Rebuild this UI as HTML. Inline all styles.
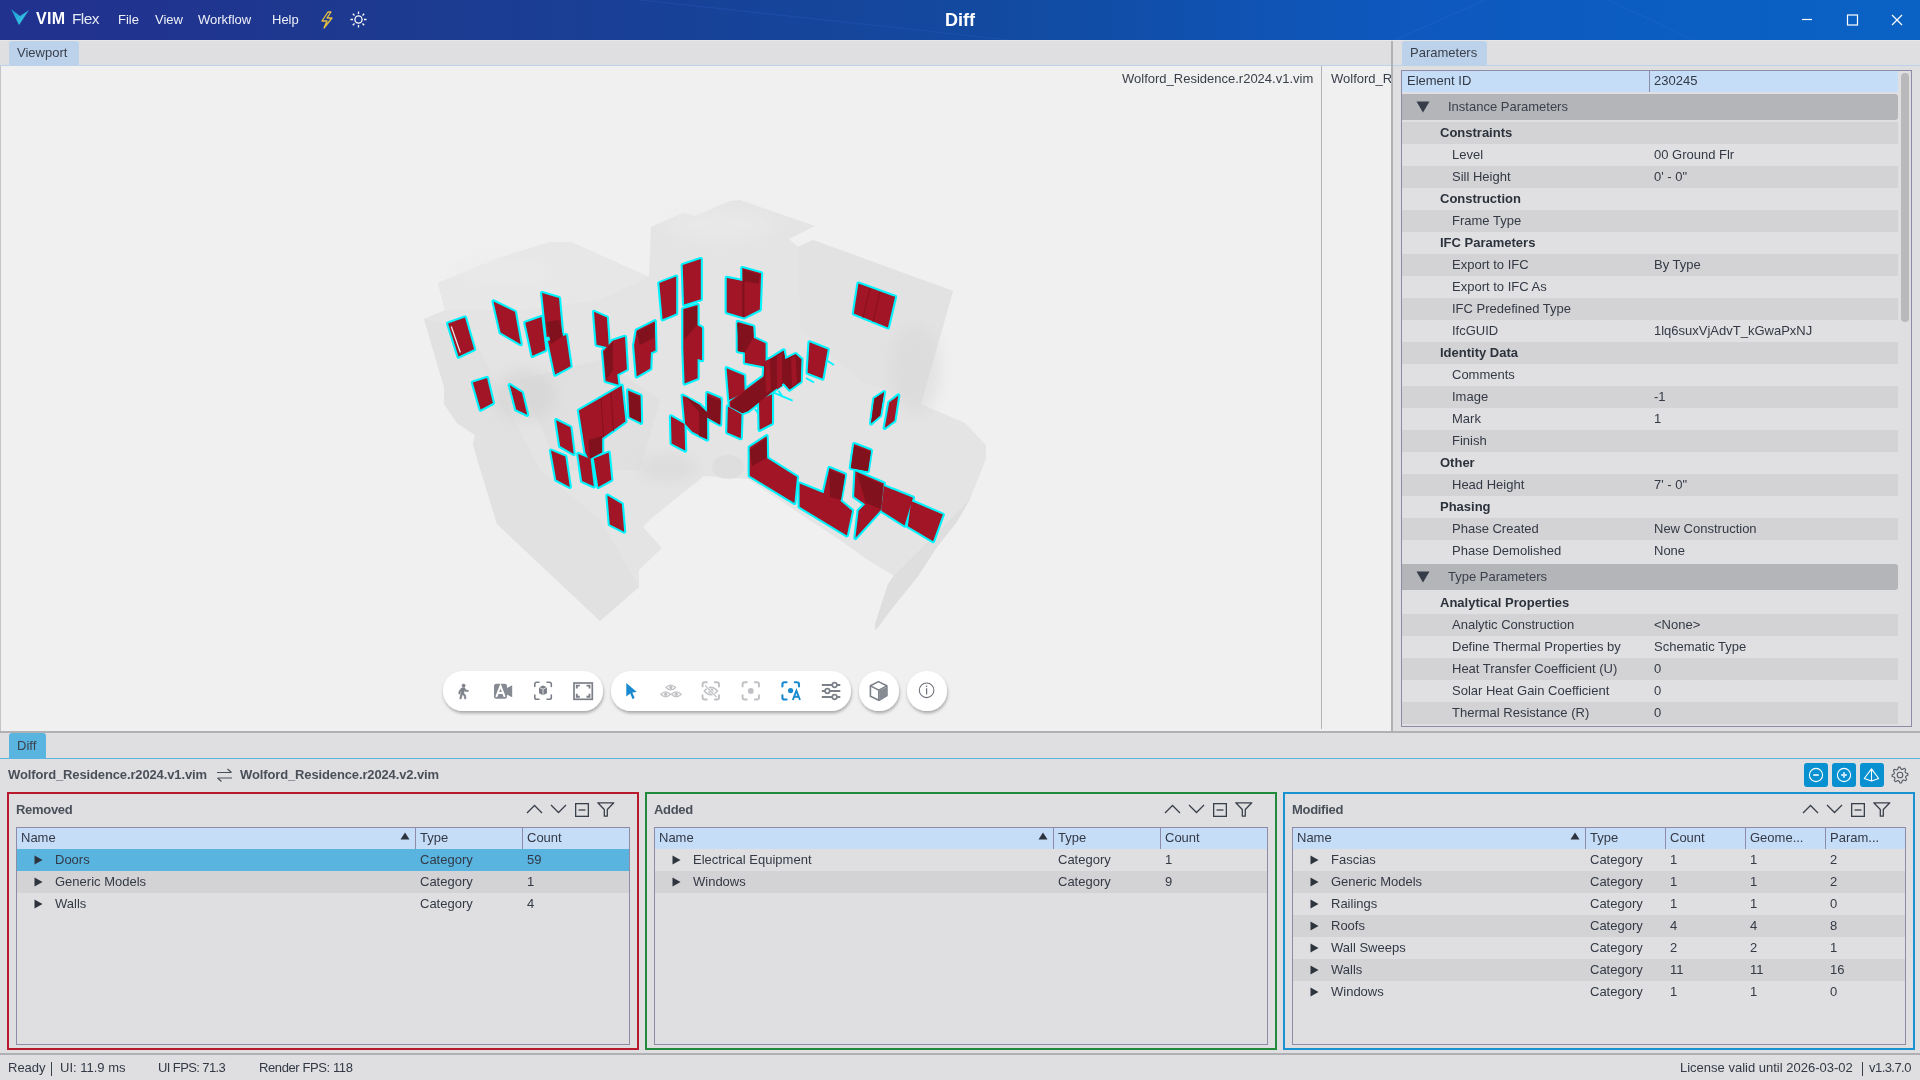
<!DOCTYPE html>
<html><head><meta charset="utf-8">
<style>
*{box-sizing:border-box;margin:0;padding:0}
html,body{width:1920px;height:1080px;overflow:hidden;background:#dfdfe1;font-family:"Liberation Sans",sans-serif;font-size:13px;color:#3b404a}
.a{position:absolute}
.t{position:absolute;white-space:pre;line-height:16px;will-change:transform}
#title{left:0;top:0;width:1920px;height:40px;background:linear-gradient(90deg,#21318e 0%,#21338f 5%,#1c3a90 21%,#124aa0 52%,#0e58be 73%,#0b5ec2 88.5%,#0a62c4 100%);overflow:hidden}
.menu{color:#eef0f8;top:12px}
.tabstrip{background:#dfdfe1}
.row{position:absolute;height:22px}
.dk{background:#d3d3d5}
.lt{background:#e0e0e2}
.pl{left:50px}
</style></head><body>
<!-- TITLE BAR -->
<div id="title" class="a">
  <svg class="a" style="left:0;top:0" width="1920" height="40">
    <path d="M640 0 L1010 40" stroke="#2a5cc0" stroke-width="1.2" opacity=".35" fill="none"/>
    <path d="M1395 40 L1485 0" stroke="#2a6ad0" stroke-width="1.2" opacity=".35" fill="none"/>
    <path d="M1608 0 L1694 40" stroke="#2a6ad0" stroke-width="1.2" opacity=".35" fill="none"/>
  </svg>
  <svg class="a" style="left:10px;top:9px" width="20" height="17" viewBox="0 0 20 17">
    <defs><linearGradient id="lg" x1="0" y1="0" x2="1" y2="1"><stop offset="0" stop-color="#1890d4"/><stop offset="1" stop-color="#40d8e6"/></linearGradient></defs>
    <path d="M1 0 L10 7 L19 1 L9 16 Z" fill="url(#lg)"/>
  </svg>
  <div class="t" style="left:35.5px;top:10.7px;color:#fff;font-weight:700;font-size:16px;letter-spacing:0.3px">VIM</div>
  <div class="t" style="left:72px;top:10.5px;color:#e4e8f4;font-size:15.5px;letter-spacing:-0.6px">Flex</div>
  <div class="t menu" style="left:118px">File</div>
  <div class="t menu" style="left:155px">View</div>
  <div class="t menu" style="left:198px">Workflow</div>
  <div class="t menu" style="left:272px">Help</div>
  <svg class="a" style="left:319px;top:11px" width="16" height="18" viewBox="0 0 16 18"><path d="M9 1 L3 10 H8 L5 17 L13 7 H8 L12 1 Z" fill="none" stroke="#e8c040" stroke-width="1.3" stroke-linejoin="round"/></svg>
  <svg class="a" style="left:350px;top:11px" width="17" height="17" viewBox="0 0 17 17"><g stroke="#fff" stroke-width="1.3" fill="none"><circle cx="8.5" cy="8.5" r="3.6"/><path d="M8.5 0.5V3M8.5 14V16.5M0.5 8.5H3M14 8.5H16.5M2.8 2.8L4.5 4.5M12.5 12.5L14.2 14.2M2.8 14.2L4.5 12.5M12.5 4.5L14.2 2.8"/></g></svg>
  <div class="t" style="left:945px;top:10px;color:#fff;font-weight:700;font-size:18px;line-height:20px">Diff</div>
  <svg class="a" style="left:1795px;top:10px" width="120" height="20">
    <g stroke="#fff" stroke-width="1.2" fill="none">
      <path d="M7 9.5H17"/>
      <rect x="52.5" y="5" width="10" height="10"/>
      <path d="M97 5L107 15M107 5L97 15"/>
    </g>
  </svg>
</div>
<div class="a" style="left:0;top:40px;width:1920px;height:1px;background:#e6e6e8"></div>

<!-- LEFT TAB STRIP -->
<div class="a tabstrip" style="left:0;top:41px;width:1391px;height:24px"></div>
<div class="a" style="left:9px;top:41px;width:70px;height:25px;background:#bcd2ea;border-radius:3px 3px 0 0"></div>
<div class="t" style="left:17px;top:45px;color:#3a404c">Viewport</div>
<div class="a" style="left:0;top:65px;width:1391px;height:1px;background:#bcd2ea"></div>

<!-- VIEWPORT -->
<div id="vp" class="a" style="left:0;top:66px;width:1391px;height:665px;background:#f0f0f0;overflow:hidden">
  <div class="a" style="left:0;top:0;width:1px;height:665px;background:#c4c4c8"></div>
  <div class="a" style="left:1321px;top:0;width:1px;height:663px;background:#b4b4b8"></div>
  <div class="t" style="left:1122px;top:5px;color:#3a404a">Wolford_Residence.r2024.v1.vim</div>
  <div class="t" style="left:1331px;top:5px;color:#3a404a">Wolford_Residence.r2024.v2.vim</div>
  <svg class="a" style="left:0;top:0" width="1391" height="665">
<polygon points="438.0,217.0 499.0,192.0 550.0,176.0 571.0,176.0 649.0,211.0 651.0,161.0 683.0,147.0 695.0,150.0 730.0,135.0 740.0,134.0 815.0,160.0 789.0,173.0 798.0,181.0 813.0,174.0 953.0,225.0 921.0,338.0 965.0,357.0 986.0,379.0 986.0,393.0 969.6,434.0 956.7,456.0 937.2,480.7 917.8,510.5 895.7,537.7 875.6,564.3 875.0,558.4 881.5,537.7 888.0,518.3 893.8,509.8 867.2,493.6 840.0,474.2 748.0,413.0 704.0,410.0 653.0,451.0 643.0,461.0 662.0,482.0 639.0,504.0 639.0,521.0 600.0,555.0 497.0,458.0 473.0,379.0 475.0,369.0 457.0,357.0 444.0,338.0 444.0,321.0 424.0,253.0 445.0,244.0" fill="#e4e4e4"/>
<polygon points="438.0,217.0 499.0,192.0 550.0,176.0 571.0,176.0 649.0,211.0 600.0,234.0 520.0,244.0 445.0,244.0" fill="#e7e7e7"/>
<polygon points="813.0,174.0 953.0,225.0 921.0,338.0 860.0,314.0 800.0,264.0 798.0,181.0" fill="#e2e2e2"/>
<polygon points="424.0,253.0 444.0,321.0 444.0,338.0 457.0,357.0 475.0,369.0 473.0,379.0 497.0,458.0 600.0,555.0 639.0,521.0 600.0,454.0 540.0,404.0 470.0,264.0" fill="#e1e1e1"/>
<polygon points="520.0,314.0 600.0,294.0 660.0,334.0 640.0,404.0 560.0,404.0" fill="#dedede" opacity=".8"/>
<polygon points="875.6,564.3 875.0,558.4 881.5,537.7 888.0,518.3 893.8,509.8 930.0,474.0 969.6,434.0 956.7,456.0 937.2,480.7 917.8,510.5 895.7,537.7" fill="#dedede"/>
<defs><filter id="bl" x="-50%" y="-50%" width="200%" height="200%"><feGaussianBlur stdDeviation="7"/></filter></defs>
<g filter="url(#bl)" opacity=".55"><ellipse cx="525" cy="329" rx="32" ry="26" fill="#d2d2d2"/><ellipse cx="668" cy="402" rx="30" ry="13" fill="#d6d6d6"/><ellipse cx="915" cy="304" rx="25" ry="45" fill="#d8d8d8"/></g>
<g filter="url(#bl)" opacity=".6"><ellipse cx="720" cy="159" rx="55" ry="16" fill="#ebebeb"/><ellipse cx="505" cy="206" rx="50" ry="14" fill="#ebebeb"/></g>
<ellipse cx="728" cy="401" rx="16" ry="12" fill="#dcdcdc" opacity=".8"/>
<g fill="#00f4ff" stroke="#00f4ff" stroke-width="4.2" stroke-linejoin="round">
<polygon points="448.1,257.4 465.0,251.6 474.1,283.3 458.5,290.5"/>
<polygon points="493.5,235.4 514.9,245.8 520.7,278.2 500.6,266.5"/>
<polygon points="525.3,256.8 541.5,250.9 545.4,284.0 532.4,289.8"/>
<polygon points="542.1,227.0 559.0,232.1 562.2,268.4 546.7,271.0"/>
<polygon points="548.0,274.9 566.1,269.1 570.6,300.2 555.1,308.6"/>
<polygon points="594.0,245.8 606.9,251.6 608.9,281.4 596.6,278.8"/>
<polygon points="603.0,285.1 612.7,274.7 625.0,270.8 626.9,303.2 617.2,308.4 618.5,318.8 605.6,314.9"/>
<polygon points="472.8,316.4 487.0,311.9 492.9,337.1 480.6,343.6"/>
<polygon points="509.7,319.0 522.0,326.8 527.2,348.8 516.2,343.6"/>
<polygon points="636.7,264.4 654.8,255.3 655.5,284.5 650.9,286.4 650.3,302.6 636.7,310.4 634.1,279.3"/>
<polygon points="659.3,217.1 676.2,210.6 676.2,247.5 662.6,253.3"/>
<polygon points="682.7,198.9 700.8,193.1 700.8,233.3 684.0,238.4"/>
<polygon points="683.3,243.0 697.6,239.1 697.6,259.2 702.1,261.8 702.1,294.2 697.6,292.9 697.6,312.3 684.6,317.5 683.3,282.5"/>
<polygon points="726.7,211.9 733.0,213.0 742.3,215.1 742.3,202.1 761.1,207.3 759.8,243.6 744.2,251.4 726.7,246.2"/>
<polygon points="737.8,255.9 753.3,260.5 754.0,272.1 765.6,277.3 765.6,300.7 744.9,296.8 744.9,286.4 737.8,285.1"/>
<polygon points="726.6,302.2 744.1,309.4 744.7,326.2 729.2,334.0"/>
<polygon points="729.6,335.5 744.4,324.4 763.7,310.3 764.4,295.5 771.9,291.8 783.7,284.4 785.2,293.3 795.6,288.1 801.5,293.3 800.7,315.5 789.6,323.6 783.7,317.0 771.9,325.9 748.1,345.1 742.2,347.3 729.6,340.7"/>
<polygon points="727.9,340.5 741.5,348.3 740.8,372.2 727.2,366.4"/>
<polygon points="759.0,334.0 772.0,328.2 772.0,357.3 759.6,363.8"/>
<polygon points="809.5,276.3 827.7,283.4 822.5,312.6 807.6,306.8"/>
<polygon points="871.1,357.3 874.3,332.7 884.0,326.2 880.2,349.5"/>
<polygon points="884.7,361.9 889.2,336.6 898.3,329.5 894.4,354.7"/>
<polygon points="858.4,217.6 895.1,230.8 887.9,261.4 853.8,247.6"/>
<polygon points="578.9,344.5 621.7,319.8 625.5,355.5 602.2,372.3 602.2,386.6 588.6,393.1 585.4,386.6"/>
<polygon points="628.1,324.4 640.5,329.6 641.1,356.8 629.4,350.9"/>
<polygon points="556.2,354.2 570.5,361.3 573.7,387.9 560.1,380.1"/>
<polygon points="551.0,384.6 565.3,390.5 569.8,420.9 556.2,413.8"/>
<polygon points="578.2,387.9 590.6,393.1 593.8,420.3 582.1,415.1"/>
<polygon points="593.8,392.4 608.7,386.6 611.3,413.8 598.3,420.9"/>
<polygon points="607.4,429.5 621.8,438.0 624.2,465.7 609.8,458.4"/>
<polygon points="670.9,350.3 684.5,358.1 685.2,384.6 671.6,377.5"/>
<polygon points="682.6,329.6 699.4,338.6 707.1,346.4 707.2,373.6 692.3,365.8 685.2,358.1"/>
<polygon points="707.2,327.0 720.8,332.8 720.2,358.7 707.2,351.6"/>
<polygon points="749.7,381.2 766.6,370.2 767.2,392.2 797.0,411.0 794.4,437.0 749.7,409.7"/>
<polygon points="799.6,417.5 823.6,427.2 829.4,402.0 845.0,408.4 840.5,435.0 852.1,444.7 846.9,469.4 799.6,440.8"/>
<polygon points="854.1,378.0 870.9,384.5 867.7,405.2 850.8,402.0"/>
<polygon points="855.4,405.2 883.9,417.5 881.3,443.4 855.4,472.0 858.6,444.7 865.1,438.2 854.1,430.5"/>
<polygon points="883.9,420.1 913.0,431.8 904.6,459.6 881.3,444.7"/>
<polygon points="911.1,435.0 942.8,448.6 933.1,475.2 907.9,460.3"/>
<path d="M827.7 295 L834 299 M806 312 L814 316.5 M771.9 325.9 L792.6 334.7 M778.5 324.4 L782.2 330.3 M755 343 L760 350" fill="none" stroke-width="1.8"/>
</g>
<g fill="#a21526">
<polygon points="448.1,257.4 465.0,251.6 474.1,283.3 458.5,290.5"/>
<polygon points="493.5,235.4 514.9,245.8 520.7,278.2 500.6,266.5"/>
<polygon points="525.3,256.8 541.5,250.9 545.4,284.0 532.4,289.8"/>
<polygon points="542.1,227.0 559.0,232.1 562.2,268.4 546.7,271.0"/>
<polygon points="548.0,274.9 566.1,269.1 570.6,300.2 555.1,308.6"/>
<polygon points="594.0,245.8 606.9,251.6 608.9,281.4 596.6,278.8"/>
<polygon points="603.0,285.1 612.7,274.7 625.0,270.8 626.9,303.2 617.2,308.4 618.5,318.8 605.6,314.9"/>
<polygon points="472.8,316.4 487.0,311.9 492.9,337.1 480.6,343.6"/>
<polygon points="509.7,319.0 522.0,326.8 527.2,348.8 516.2,343.6"/>
<polygon points="636.7,264.4 654.8,255.3 655.5,284.5 650.9,286.4 650.3,302.6 636.7,310.4 634.1,279.3"/>
<polygon points="659.3,217.1 676.2,210.6 676.2,247.5 662.6,253.3"/>
<polygon points="682.7,198.9 700.8,193.1 700.8,233.3 684.0,238.4"/>
<polygon points="683.3,243.0 697.6,239.1 697.6,259.2 702.1,261.8 702.1,294.2 697.6,292.9 697.6,312.3 684.6,317.5 683.3,282.5"/>
<polygon points="726.7,211.9 733.0,213.0 742.3,215.1 742.3,202.1 761.1,207.3 759.8,243.6 744.2,251.4 726.7,246.2"/>
<polygon points="737.8,255.9 753.3,260.5 754.0,272.1 765.6,277.3 765.6,300.7 744.9,296.8 744.9,286.4 737.8,285.1"/>
<polygon points="726.6,302.2 744.1,309.4 744.7,326.2 729.2,334.0"/>
<polygon points="729.6,335.5 744.4,324.4 763.7,310.3 764.4,295.5 771.9,291.8 783.7,284.4 785.2,293.3 795.6,288.1 801.5,293.3 800.7,315.5 789.6,323.6 783.7,317.0 771.9,325.9 748.1,345.1 742.2,347.3 729.6,340.7"/>
<polygon points="727.9,340.5 741.5,348.3 740.8,372.2 727.2,366.4"/>
<polygon points="759.0,334.0 772.0,328.2 772.0,357.3 759.6,363.8"/>
<polygon points="809.5,276.3 827.7,283.4 822.5,312.6 807.6,306.8"/>
<polygon points="871.1,357.3 874.3,332.7 884.0,326.2 880.2,349.5"/>
<polygon points="884.7,361.9 889.2,336.6 898.3,329.5 894.4,354.7"/>
<polygon points="858.4,217.6 895.1,230.8 887.9,261.4 853.8,247.6"/>
<polygon points="578.9,344.5 621.7,319.8 625.5,355.5 602.2,372.3 602.2,386.6 588.6,393.1 585.4,386.6"/>
<polygon points="628.1,324.4 640.5,329.6 641.1,356.8 629.4,350.9"/>
<polygon points="556.2,354.2 570.5,361.3 573.7,387.9 560.1,380.1"/>
<polygon points="551.0,384.6 565.3,390.5 569.8,420.9 556.2,413.8"/>
<polygon points="578.2,387.9 590.6,393.1 593.8,420.3 582.1,415.1"/>
<polygon points="593.8,392.4 608.7,386.6 611.3,413.8 598.3,420.9"/>
<polygon points="607.4,429.5 621.8,438.0 624.2,465.7 609.8,458.4"/>
<polygon points="670.9,350.3 684.5,358.1 685.2,384.6 671.6,377.5"/>
<polygon points="682.6,329.6 699.4,338.6 707.1,346.4 707.2,373.6 692.3,365.8 685.2,358.1"/>
<polygon points="707.2,327.0 720.8,332.8 720.2,358.7 707.2,351.6"/>
<polygon points="749.7,381.2 766.6,370.2 767.2,392.2 797.0,411.0 794.4,437.0 749.7,409.7"/>
<polygon points="799.6,417.5 823.6,427.2 829.4,402.0 845.0,408.4 840.5,435.0 852.1,444.7 846.9,469.4 799.6,440.8"/>
<polygon points="854.1,378.0 870.9,384.5 867.7,405.2 850.8,402.0"/>
<polygon points="855.4,405.2 883.9,417.5 881.3,443.4 855.4,472.0 858.6,444.7 865.1,438.2 854.1,430.5"/>
<polygon points="883.9,420.1 913.0,431.8 904.6,459.6 881.3,444.7"/>
<polygon points="911.1,435.0 942.8,448.6 933.1,475.2 907.9,460.3"/>
</g>
<g fill="#80111d">
<polygon points="546.0,256.0 559.0,254.0 563.0,270.0 551.0,278.0"/>
<polygon points="743.0,203.4 759.8,208.5 758.8,217.7 743.0,215.1"/>
<polygon points="742.3,215.1 744.5,215.0 744.5,251.0 742.3,251.0"/>
<polygon points="737.8,257.0 753.0,261.0 753.0,272.0 744.9,286.4 737.8,285.0"/>
<polygon points="764.4,296.0 771.9,292.5 783.7,285.0 785.2,293.3 795.6,288.6 800.7,294.0 800.7,315.5 789.6,323.6 783.7,317.0 771.9,325.9 748.1,345.1 742.2,347.3 731.0,340.5 731.0,336.5 744.4,325.5 763.7,311.3"/>
<polygon points="588.6,374.0 602.0,370.0 602.0,386.0 590.0,393.0"/>
<polygon points="749.7,384.0 766.6,372.0 766.6,392.0 752.0,400.0"/>
<polygon points="829.4,404.0 845.0,410.0 841.0,434.0 830.0,431.0"/>
<polygon points="854.1,380.0 870.9,386.0 868.0,405.0 851.0,402.0"/>
<polygon points="857.0,407.0 883.0,419.0 881.0,443.0 866.0,437.0"/>
<polygon points="685.0,330.0 699.0,339.0 707.0,346.0 707.0,373.0 699.0,370.0 699.0,346.0"/>
<polygon points="629.0,326.0 640.0,331.0 641.0,356.0 630.0,351.0"/>
<polygon points="604.0,286.0 612.7,276.0 613.0,304.0 606.0,314.0"/>
<polygon points="684.0,244.0 697.0,240.0 697.0,259.0 684.0,274.0"/>
<polygon points="737.0,257.0 753.0,261.0 752.0,271.0 738.0,270.0"/>
<polygon points="871.1,357.3 874.3,332.7 884.0,326.2 880.2,349.5"/>
<polygon points="636.7,266.0 654.8,257.0 654.0,272.0 640.0,279.0"/>
<polygon points="707.2,330.0 720.8,335.0 720.2,358.7 707.2,351.6"/>
</g>
<g fill="#a01525"><polygon points="765.0,296.0 770.0,293.5 771.0,324.0 766.0,327.5"/><polygon points="777.0,290.0 782.0,287.5 782.0,320.0 777.0,323.5"/><polygon points="791.0,292.0 795.5,289.5 797.0,317.0 792.0,320.5"/></g>
<path d="M451.3 260.5 L460.3 286.5" stroke="#e6e6e6" stroke-width="1.3"/>
<path d="M870 222 L863 252 M880 226 L873 256 M601 333 L603.5 371 M611 327 L613.5 365" stroke="#7e0f1a" stroke-width="1" opacity=".8"/>
</svg>
  <svg class="a" style="left:0;top:0" width="1391" height="665">
<defs><filter id="sh" x="-20%" y="-40%" width="140%" height="190%"><feDropShadow dx="0.6" dy="2.2" stdDeviation="1.5" flood-color="#000" flood-opacity="0.3"/></filter></defs>
<g transform="translate(0,-66)">
<g fill="#fff" filter="url(#sh)">
<rect x="443" y="671" width="160" height="40" rx="20"/>
<rect x="611" y="671" width="240" height="40" rx="20"/>
<circle cx="879" cy="691" r="20"/>
<circle cx="927" cy="691" r="20"/>
</g>
<!-- walker -->
<g fill="#7c8088" stroke="#7c8088" stroke-width="0.6" stroke-linejoin="round">
<circle cx="463.6" cy="685.6" r="1.6"/>
<path d="M461.5 688 L464.5 687.6 L466 690.2 L468.3 690.3 L468.3 691.4 L465.4 691.4 L464.5 690 L463.7 693.2 L465.6 695.3 L466 698.8 L464.6 698.8 L464.2 696 L462.4 694.3 L461.2 698.8 L459.7 698.8 L461.5 691 L460.2 692 L460 694 L458.8 694 L459 691.2 Z"/>
</g>
<!-- camera A -->
<rect x="494" y="683.8" width="13" height="15" rx="2.2" fill="#868a92"/>
<path d="M506 688.5 L512.2 685.3 V697.3 L506 694 Z" fill="#868a92"/>
<path d="M496.3 696.8 L500.5 686 L504.7 696.8 M497.9 693 H503.1" fill="none" stroke="#fff" stroke-width="2"/>
<!-- bracket cube -->
<g fill="none" stroke="#7c8088" stroke-width="1.6" stroke-linecap="round">
<path d="M534.8 686.5 V684 Q534.8 682.3 536.5 682.3 H539"/>
<path d="M547 682.3 H549.5 Q551.3 682.3 551.3 684 V686.5"/>
<path d="M534.8 695 V697.5 Q534.8 699.3 536.5 699.3 H539"/>
<path d="M547 699.3 H549.5 Q551.3 699.3 551.3 697.5 V695"/>
</g>
<path d="M539 687.3 L543 685.5 L547 687.3 V693.3 L543 695.3 L539 693.3 Z" fill="#7c8088"/>
<path d="M539 687.3 L543 689.2 L547 687.3 M543 689.2 V695.3" fill="none" stroke="#fff" stroke-width="0.7"/>
<!-- fullscreen -->
<rect x="574" y="683" width="18.3" height="16.3" fill="none" stroke="#7c8088" stroke-width="1.7"/>
<g fill="none" stroke="#7c8088" stroke-width="1.9">
<path d="M576.8 688.5 V685.6 H579.8 M586.5 685.6 H589.5 V688.5 M576.8 693.8 V696.7 H579.8 M586.5 696.7 H589.5 V693.8"/>
</g>
<!-- cursor -->
<path d="M626.3 683 L636.8 692 L632.3 692.4 L634.6 697.8 L632.6 699.3 L630.2 693.6 L626.3 696.6 Z" fill="#1a8ad0"/>
<!-- three eyes -->
<g fill="none" stroke="#c0c1c5" stroke-width="1.25">
<path d="M666 687.5 Q670.8 682.6 675.6 687.5 Q670.8 692.4 666 687.5 Z"/>
<path d="M660.9 694.3 Q665.7 689.4 670.5 694.3 Q665.7 699.2 660.9 694.3 Z"/>
<path d="M671.5 694.3 Q676.3 689.4 681.1 694.3 Q676.3 699.2 671.5 694.3 Z"/>
</g>
<g fill="#c0c1c5"><circle cx="670.8" cy="687.5" r="1.7"/><circle cx="665.7" cy="694.3" r="1.7"/><circle cx="676.3" cy="694.3" r="1.7"/></g>
<!-- eye crossed brackets -->
<g fill="none" stroke="#c0c1c5" stroke-width="1.9" stroke-linecap="round">
<path d="M702.6 686.5 V684.4 Q702.6 682.3 704.7 682.3 H706.8 M714.8 682.3 H716.9 Q719 682.3 719 684.4 V686.5 M702.6 695.3 V697.4 Q702.6 699.5 704.7 699.5 H706.8 M714.8 699.5 H716.9 Q719 699.5 719 697.4 V695.3"/>
</g>
<path d="M704.2 691 Q710.9 683.5 717.6 691 Q710.9 698.5 704.2 691 Z" fill="none" stroke="#c0c1c5" stroke-width="1.3"/>
<circle cx="710.9" cy="691" r="2.6" fill="#c0c1c5"/>
<path d="M705 685.3 L716.5 697" stroke="#ffffff" stroke-width="2.4"/>
<path d="M705 685.3 L716.5 697" stroke="#c0c1c5" stroke-width="1.2"/>
<!-- brackets dot -->
<g fill="none" stroke="#c0c1c5" stroke-width="1.9" stroke-linecap="round">
<path d="M742.6 686.5 V684.4 Q742.6 682.3 744.7 682.3 H746.8 M754.8 682.3 H756.9 Q759 682.3 759 684.4 V686.5 M742.6 695.3 V697.4 Q742.6 699.5 744.7 699.5 H746.8 M754.8 699.5 H756.9 Q759 699.5 759 697.4 V695.3"/>
</g>
<circle cx="750.8" cy="690.9" r="2.9" fill="#c0c1c5"/>
<!-- brackets dot A blue -->
<g fill="none" stroke="#1a8ad0" stroke-width="2.1" stroke-linecap="round">
<path d="M782.4 686.5 V684.4 Q782.4 682.3 784.5 682.3 H786.6 M794.8 682.3 H796.9 Q799 682.3 799 684.4 V686.5 M782.4 695.3 V697.4 Q782.4 699.5 784.5 699.5 H786.6"/>
</g>
<circle cx="790.6" cy="690.6" r="2.6" fill="#1a8ad0"/>
<path d="M792.8 700 L796.4 690.6 L800 700 M793.9 696.8 H798.9" fill="none" stroke="#1a8ad0" stroke-width="1.9"/>
<!-- sliders -->
<g stroke="#7c8088" stroke-width="2.1" fill="none">
<path d="M821.8 685 H840.3 M821.8 691 H840.3 M821.8 697 H840.3"/>
</g>
<g fill="#fff" stroke="#7c8088" stroke-width="1.7">
<circle cx="834.6" cy="685" r="2.3"/><circle cx="827.4" cy="691" r="2.3"/><circle cx="834.6" cy="697" r="2.3"/>
</g>
<!-- cube -->
<path d="M870.4 685.8 L878.4 681.6 L886.8 685.8 L886.8 695.5 L878.8 700.3 L870.4 696.2 Z" fill="none" stroke="#7c8088" stroke-width="1.6" stroke-linejoin="round"/>
<path d="M870.4 685.8 L878.8 690.2 L886.8 685.8 M878.8 690.2 V700.3" fill="none" stroke="#7c8088" stroke-width="1.5"/>
<path d="M879.2 690.6 L887.4 686.8 V696 L879.2 701 Z" fill="#868a92"/>
<!-- info -->
<circle cx="926.6" cy="690.3" r="7.3" fill="none" stroke="#6c7078" stroke-width="1.1"/>
<path d="M926.6 688.3 V694.5" stroke="#6c7078" stroke-width="1.2"/>
<circle cx="926.6" cy="686.3" r="0.8" fill="#6c7078"/>
</g>
</svg>

</div>

<!-- SPLITTERS -->
<div class="a" style="left:1391px;top:41px;width:2px;height:692px;background:#b0b1b5"></div>
<div class="a" style="left:0;top:731px;width:1920px;height:2px;background:#b0b1b5"></div>

<!-- RIGHT PANEL -->
<div class="a tabstrip" style="left:1393px;top:41px;width:527px;height:24px"></div>
<div class="a" style="left:1402px;top:41px;width:85px;height:25px;background:#bcd2ea;border-radius:3px 3px 0 0"></div>
<div class="t" style="left:1410px;top:45px;color:#3a404c">Parameters</div>
<div class="a" style="left:1393px;top:65px;width:527px;height:1px;background:#bcd2ea"></div>
<div id="params" class="a" style="left:1401px;top:70px;width:511px;height:657px;border:1px solid #8e8ba6;overflow:hidden"><div class="a" style="left:0;top:0;width:496px;height:21px;background:#c6ddf7"></div>
<div class="a" style="left:247px;top:0;width:1px;height:21px;background:#8e8ba6"></div>
<div class="t" style="left:5px;top:-1px;line-height:21px;color:#333945">Element ID</div>
<div class="t" style="left:252px;top:-1px;line-height:21px;color:#333945">230245</div>
<div class="a" style="left:0;top:23px;width:496px;height:26px;background:#b4b5b8;border-radius:0 3px 3px 0"></div>
<svg class="a" style="left:14px;top:30px" width="14" height="12"><path d="M0.5 0.5H13.5L7 11.5Z" fill="#363c48"/></svg>
<div class="t" style="left:46px;top:23px;line-height:26px;color:#3a404c">Instance Parameters</div>
<div class="a" style="left:0;top:51px;width:496px;height:22px;background:#d3d3d5"></div>
<div class="t" style="left:38px;top:51px;line-height:22px;font-weight:700;color:#2c323c">Constraints</div>
<div class="a" style="left:0;top:73px;width:496px;height:22px;background:#e0e0e2"></div>
<div class="t" style="left:50px;top:73px;line-height:22px;color:#333945">Level</div>
<div class="t" style="left:252px;top:73px;line-height:22px;color:#333945">00 Ground Flr</div>
<div class="a" style="left:0;top:95px;width:496px;height:22px;background:#d3d3d5"></div>
<div class="t" style="left:50px;top:95px;line-height:22px;color:#333945">Sill Height</div>
<div class="t" style="left:252px;top:95px;line-height:22px;color:#333945">0' - 0"</div>
<div class="a" style="left:0;top:117px;width:496px;height:22px;background:#e0e0e2"></div>
<div class="t" style="left:38px;top:117px;line-height:22px;font-weight:700;color:#2c323c">Construction</div>
<div class="a" style="left:0;top:139px;width:496px;height:22px;background:#d3d3d5"></div>
<div class="t" style="left:50px;top:139px;line-height:22px;color:#333945">Frame Type</div>
<div class="a" style="left:0;top:161px;width:496px;height:22px;background:#e0e0e2"></div>
<div class="t" style="left:38px;top:161px;line-height:22px;font-weight:700;color:#2c323c">IFC Parameters</div>
<div class="a" style="left:0;top:183px;width:496px;height:22px;background:#d3d3d5"></div>
<div class="t" style="left:50px;top:183px;line-height:22px;color:#333945">Export to IFC</div>
<div class="t" style="left:252px;top:183px;line-height:22px;color:#333945">By Type</div>
<div class="a" style="left:0;top:205px;width:496px;height:22px;background:#e0e0e2"></div>
<div class="t" style="left:50px;top:205px;line-height:22px;color:#333945">Export to IFC As</div>
<div class="a" style="left:0;top:227px;width:496px;height:22px;background:#d3d3d5"></div>
<div class="t" style="left:50px;top:227px;line-height:22px;color:#333945">IFC Predefined Type</div>
<div class="a" style="left:0;top:249px;width:496px;height:22px;background:#e0e0e2"></div>
<div class="t" style="left:50px;top:249px;line-height:22px;color:#333945">IfcGUID</div>
<div class="t" style="left:252px;top:249px;line-height:22px;color:#333945">1lq6suxVjAdvT_kGwaPxNJ</div>
<div class="a" style="left:0;top:271px;width:496px;height:22px;background:#d3d3d5"></div>
<div class="t" style="left:38px;top:271px;line-height:22px;font-weight:700;color:#2c323c">Identity Data</div>
<div class="a" style="left:0;top:293px;width:496px;height:22px;background:#e0e0e2"></div>
<div class="t" style="left:50px;top:293px;line-height:22px;color:#333945">Comments</div>
<div class="a" style="left:0;top:315px;width:496px;height:22px;background:#d3d3d5"></div>
<div class="t" style="left:50px;top:315px;line-height:22px;color:#333945">Image</div>
<div class="t" style="left:252px;top:315px;line-height:22px;color:#333945">-1</div>
<div class="a" style="left:0;top:337px;width:496px;height:22px;background:#e0e0e2"></div>
<div class="t" style="left:50px;top:337px;line-height:22px;color:#333945">Mark</div>
<div class="t" style="left:252px;top:337px;line-height:22px;color:#333945">1</div>
<div class="a" style="left:0;top:359px;width:496px;height:22px;background:#d3d3d5"></div>
<div class="t" style="left:50px;top:359px;line-height:22px;color:#333945">Finish</div>
<div class="a" style="left:0;top:381px;width:496px;height:22px;background:#e0e0e2"></div>
<div class="t" style="left:38px;top:381px;line-height:22px;font-weight:700;color:#2c323c">Other</div>
<div class="a" style="left:0;top:403px;width:496px;height:22px;background:#d3d3d5"></div>
<div class="t" style="left:50px;top:403px;line-height:22px;color:#333945">Head Height</div>
<div class="t" style="left:252px;top:403px;line-height:22px;color:#333945">7' - 0"</div>
<div class="a" style="left:0;top:425px;width:496px;height:22px;background:#e0e0e2"></div>
<div class="t" style="left:38px;top:425px;line-height:22px;font-weight:700;color:#2c323c">Phasing</div>
<div class="a" style="left:0;top:447px;width:496px;height:22px;background:#d3d3d5"></div>
<div class="t" style="left:50px;top:447px;line-height:22px;color:#333945">Phase Created</div>
<div class="t" style="left:252px;top:447px;line-height:22px;color:#333945">New Construction</div>
<div class="a" style="left:0;top:469px;width:496px;height:22px;background:#e0e0e2"></div>
<div class="t" style="left:50px;top:469px;line-height:22px;color:#333945">Phase Demolished</div>
<div class="t" style="left:252px;top:469px;line-height:22px;color:#333945">None</div>
<div class="a" style="left:0;top:493px;width:496px;height:26px;background:#b4b5b8;border-radius:0 3px 3px 0"></div>
<svg class="a" style="left:14px;top:500px" width="14" height="12"><path d="M0.5 0.5H13.5L7 11.5Z" fill="#363c48"/></svg>
<div class="t" style="left:46px;top:493px;line-height:26px;color:#3a404c">Type Parameters</div>
<div class="a" style="left:0;top:521px;width:496px;height:22px;background:#e0e0e2"></div>
<div class="t" style="left:38px;top:521px;line-height:22px;font-weight:700;color:#2c323c">Analytical Properties</div>
<div class="a" style="left:0;top:543px;width:496px;height:22px;background:#d3d3d5"></div>
<div class="t" style="left:50px;top:543px;line-height:22px;color:#333945">Analytic Construction</div>
<div class="t" style="left:252px;top:543px;line-height:22px;color:#333945">&lt;None&gt;</div>
<div class="a" style="left:0;top:565px;width:496px;height:22px;background:#e0e0e2"></div>
<div class="t" style="left:50px;top:565px;line-height:22px;color:#333945">Define Thermal Properties by</div>
<div class="t" style="left:252px;top:565px;line-height:22px;color:#333945">Schematic Type</div>
<div class="a" style="left:0;top:587px;width:496px;height:22px;background:#d3d3d5"></div>
<div class="t" style="left:50px;top:587px;line-height:22px;color:#333945">Heat Transfer Coefficient (U)</div>
<div class="t" style="left:252px;top:587px;line-height:22px;color:#333945">0</div>
<div class="a" style="left:0;top:609px;width:496px;height:22px;background:#e0e0e2"></div>
<div class="t" style="left:50px;top:609px;line-height:22px;color:#333945">Solar Heat Gain Coefficient</div>
<div class="t" style="left:252px;top:609px;line-height:22px;color:#333945">0</div>
<div class="a" style="left:0;top:631px;width:496px;height:22px;background:#d3d3d5"></div>
<div class="t" style="left:50px;top:631px;line-height:22px;color:#333945">Thermal Resistance (R)</div>
<div class="t" style="left:252px;top:631px;line-height:22px;color:#333945">0</div>
<div class="a" style="left:499px;top:2px;width:8px;height:249px;background:#b9b9bb;border-radius:4px"></div></div>

<!-- DIFF PANEL -->
<div class="a tabstrip" style="left:0;top:733px;width:1920px;height:25px"></div>
<div class="a" style="left:9px;top:733px;width:37px;height:26px;background:#5ab4e0;border-radius:3px 3px 0 0"></div>
<div class="t" style="left:17px;top:738px;color:#3a404c">Diff</div>
<div class="a" style="left:0;top:758px;width:1920px;height:1px;background:#5ab4e0"></div>
<div class="t" style="left:8px;top:767px;font-weight:700;color:#4a505a;letter-spacing:-0.13px">Wolford_Residence.r2024.v1.vim</div>
<svg class="a" style="left:216px;top:768px" width="17" height="14"><g fill="none" stroke="#4a505a" stroke-width="1.2"><path d="M1 4.5H15.5M11.5 1L15.5 4.5"/><path d="M16 10H1.5M5.5 13.5L1.5 10"/></g></svg>
<div class="t" style="left:240px;top:767px;font-weight:700;color:#4a505a;letter-spacing:-0.13px">Wolford_Residence.r2024.v2.vim</div>
<div class="a" style="left:1804px;top:763px;width:24px;height:24px;background:#0890d0;border-radius:3px"></div>
<div class="a" style="left:1832px;top:763px;width:24px;height:24px;background:#0890d0;border-radius:3px"></div>
<div class="a" style="left:1860px;top:763px;width:24px;height:24px;background:#0890d0;border-radius:3px"></div>
<svg class="a" style="left:1804px;top:763px" width="80" height="24"><g fill="none" stroke="#fff" stroke-width="1.1"><circle cx="12" cy="12" r="6.6"/><circle cx="40" cy="12" r="6.6"/><path d="M67.5 5.8V18M67.5 5.8L60.3 15.5L67.5 18L74.7 15.5Z" stroke-linejoin="round"/></g><path d="M9.2 12H14.8M37.2 12H42.8M40 9.2V14.8" stroke="#c8e8f8" stroke-width="1.9"/></svg>
<svg class="a" style="left:0;top:0;pointer-events:none" width="1920" height="1080"><polygon points="1907.85,773.44 1908.00,775.00 1905.88,776.17 1905.54,777.30 1906.65,779.44 1905.66,780.66 1903.33,779.99 1902.30,780.54 1901.56,782.85 1900.00,783.00 1898.83,780.88 1897.70,780.54 1895.56,781.65 1894.34,780.66 1895.01,778.33 1894.46,777.30 1892.15,776.56 1892.00,775.00 1894.12,773.83 1894.46,772.70 1893.35,770.56 1894.34,769.34 1896.67,770.01 1897.70,769.46 1898.44,767.15 1900.00,767.00 1901.17,769.12 1902.30,769.46 1904.44,768.35 1905.66,769.34 1904.99,771.67 1905.54,772.70" fill="none" stroke="#555a64" stroke-width="1.1" stroke-linejoin="round"/><circle cx="1900" cy="775" r="2.8" fill="none" stroke="#555a64" stroke-width="1.1"/></svg>
<div class="a" style="left:7px;top:792px;width:632px;height:258px;border:2px solid #b8192c"></div>
<div class="t" style="left:16px;top:801.5px;font-weight:700;color:#4a505a;letter-spacing:-0.3px">Removed</div>
<svg class="a" style="left:526px;top:804px" width="17" height="10"><path d="M1 9L8.5 1.5L16 9" fill="none" stroke="#3a404a" stroke-width="1.3"/></svg>
<svg class="a" style="left:550px;top:804px" width="17" height="10"><path d="M1 1L8.5 8.5L16 1" fill="none" stroke="#3a404a" stroke-width="1.3"/></svg>
<svg class="a" style="left:575px;top:803px" width="14" height="14"><rect x="0.65" y="0.65" width="12.7" height="12.7" fill="none" stroke="#3a404a" stroke-width="1.3"/><path d="M3.5 7H10.5" stroke="#3a404a" stroke-width="1.3"/></svg>
<svg class="a" style="left:597px;top:802px" width="18" height="15"><path d="M0.8 0.8H16.8L10.3 7.5V14.2H7.3V7.5Z" fill="none" stroke="#3a404a" stroke-width="1.3" stroke-linejoin="round"/></svg>
<div class="a" style="left:16px;top:827px;width:614px;height:218px;border:1px solid #8e8ba6"></div>
<div class="a" style="left:17px;top:828px;width:612px;height:21px;background:#c6ddf7"></div>
<div class="t" style="left:21px;top:827px;line-height:21px;color:#333945">Name</div>
<div class="a" style="left:415px;top:828px;width:1px;height:21px;background:#8e8ba6"></div>
<div class="t" style="left:420px;top:827px;line-height:21px;color:#333945">Type</div>
<div class="a" style="left:522px;top:828px;width:1px;height:21px;background:#8e8ba6"></div>
<div class="t" style="left:527px;top:827px;line-height:21px;color:#333945">Count</div>
<svg class="a" style="left:400px;top:832px" width="10" height="8"><path d="M0.5 7.5H9.5L5 0.5Z" fill="#2e343e"/></svg>
<div class="a" style="left:17px;top:849px;width:612px;height:22px;background:#5ab4e0"></div>
<svg class="a" style="left:34px;top:855px" width="9" height="10"><path d="M0.5 0.5L8.5 5L0.5 9.5Z" fill="#2e343e"/></svg>
<div class="t" style="left:55px;top:849px;line-height:22px;color:#333945">Doors</div>
<div class="t" style="left:420px;top:849px;line-height:22px;color:#333945">Category</div>
<div class="t" style="left:527px;top:849px;line-height:22px;color:#333945">59</div>
<div class="a" style="left:17px;top:871px;width:612px;height:22px;background:#d3d3d5"></div>
<svg class="a" style="left:34px;top:877px" width="9" height="10"><path d="M0.5 0.5L8.5 5L0.5 9.5Z" fill="#2e343e"/></svg>
<div class="t" style="left:55px;top:871px;line-height:22px;color:#333945">Generic Models</div>
<div class="t" style="left:420px;top:871px;line-height:22px;color:#333945">Category</div>
<div class="t" style="left:527px;top:871px;line-height:22px;color:#333945">1</div>
<svg class="a" style="left:34px;top:899px" width="9" height="10"><path d="M0.5 0.5L8.5 5L0.5 9.5Z" fill="#2e343e"/></svg>
<div class="t" style="left:55px;top:893px;line-height:22px;color:#333945">Walls</div>
<div class="t" style="left:420px;top:893px;line-height:22px;color:#333945">Category</div>
<div class="t" style="left:527px;top:893px;line-height:22px;color:#333945">4</div>
<div class="a" style="left:645px;top:792px;width:632px;height:258px;border:2px solid #218a3c"></div>
<div class="t" style="left:654px;top:801.5px;font-weight:700;color:#4a505a;letter-spacing:-0.3px">Added</div>
<svg class="a" style="left:1164px;top:804px" width="17" height="10"><path d="M1 9L8.5 1.5L16 9" fill="none" stroke="#3a404a" stroke-width="1.3"/></svg>
<svg class="a" style="left:1188px;top:804px" width="17" height="10"><path d="M1 1L8.5 8.5L16 1" fill="none" stroke="#3a404a" stroke-width="1.3"/></svg>
<svg class="a" style="left:1213px;top:803px" width="14" height="14"><rect x="0.65" y="0.65" width="12.7" height="12.7" fill="none" stroke="#3a404a" stroke-width="1.3"/><path d="M3.5 7H10.5" stroke="#3a404a" stroke-width="1.3"/></svg>
<svg class="a" style="left:1235px;top:802px" width="18" height="15"><path d="M0.8 0.8H16.8L10.3 7.5V14.2H7.3V7.5Z" fill="none" stroke="#3a404a" stroke-width="1.3" stroke-linejoin="round"/></svg>
<div class="a" style="left:654px;top:827px;width:614px;height:218px;border:1px solid #8e8ba6"></div>
<div class="a" style="left:655px;top:828px;width:612px;height:21px;background:#c6ddf7"></div>
<div class="t" style="left:659px;top:827px;line-height:21px;color:#333945">Name</div>
<div class="a" style="left:1053px;top:828px;width:1px;height:21px;background:#8e8ba6"></div>
<div class="t" style="left:1058px;top:827px;line-height:21px;color:#333945">Type</div>
<div class="a" style="left:1160px;top:828px;width:1px;height:21px;background:#8e8ba6"></div>
<div class="t" style="left:1165px;top:827px;line-height:21px;color:#333945">Count</div>
<svg class="a" style="left:1038px;top:832px" width="10" height="8"><path d="M0.5 7.5H9.5L5 0.5Z" fill="#2e343e"/></svg>
<svg class="a" style="left:672px;top:855px" width="9" height="10"><path d="M0.5 0.5L8.5 5L0.5 9.5Z" fill="#2e343e"/></svg>
<div class="t" style="left:693px;top:849px;line-height:22px;color:#333945">Electrical Equipment</div>
<div class="t" style="left:1058px;top:849px;line-height:22px;color:#333945">Category</div>
<div class="t" style="left:1165px;top:849px;line-height:22px;color:#333945">1</div>
<div class="a" style="left:655px;top:871px;width:612px;height:22px;background:#d3d3d5"></div>
<svg class="a" style="left:672px;top:877px" width="9" height="10"><path d="M0.5 0.5L8.5 5L0.5 9.5Z" fill="#2e343e"/></svg>
<div class="t" style="left:693px;top:871px;line-height:22px;color:#333945">Windows</div>
<div class="t" style="left:1058px;top:871px;line-height:22px;color:#333945">Category</div>
<div class="t" style="left:1165px;top:871px;line-height:22px;color:#333945">9</div>
<div class="a" style="left:1283px;top:792px;width:632px;height:258px;border:2px solid #1a92d2"></div>
<div class="t" style="left:1292px;top:801.5px;font-weight:700;color:#4a505a;letter-spacing:-0.3px">Modified</div>
<svg class="a" style="left:1802px;top:804px" width="17" height="10"><path d="M1 9L8.5 1.5L16 9" fill="none" stroke="#3a404a" stroke-width="1.3"/></svg>
<svg class="a" style="left:1826px;top:804px" width="17" height="10"><path d="M1 1L8.5 8.5L16 1" fill="none" stroke="#3a404a" stroke-width="1.3"/></svg>
<svg class="a" style="left:1851px;top:803px" width="14" height="14"><rect x="0.65" y="0.65" width="12.7" height="12.7" fill="none" stroke="#3a404a" stroke-width="1.3"/><path d="M3.5 7H10.5" stroke="#3a404a" stroke-width="1.3"/></svg>
<svg class="a" style="left:1873px;top:802px" width="18" height="15"><path d="M0.8 0.8H16.8L10.3 7.5V14.2H7.3V7.5Z" fill="none" stroke="#3a404a" stroke-width="1.3" stroke-linejoin="round"/></svg>
<div class="a" style="left:1292px;top:827px;width:614px;height:218px;border:1px solid #8e8ba6"></div>
<div class="a" style="left:1293px;top:828px;width:612px;height:21px;background:#c6ddf7"></div>
<div class="t" style="left:1297px;top:827px;line-height:21px;color:#333945">Name</div>
<div class="a" style="left:1585px;top:828px;width:1px;height:21px;background:#8e8ba6"></div>
<div class="t" style="left:1590px;top:827px;line-height:21px;color:#333945">Type</div>
<div class="a" style="left:1665px;top:828px;width:1px;height:21px;background:#8e8ba6"></div>
<div class="t" style="left:1670px;top:827px;line-height:21px;color:#333945">Count</div>
<div class="a" style="left:1745px;top:828px;width:1px;height:21px;background:#8e8ba6"></div>
<div class="t" style="left:1750px;top:827px;line-height:21px;color:#333945">Geome...</div>
<div class="a" style="left:1825px;top:828px;width:1px;height:21px;background:#8e8ba6"></div>
<div class="t" style="left:1830px;top:827px;line-height:21px;color:#333945">Param...</div>
<svg class="a" style="left:1570px;top:832px" width="10" height="8"><path d="M0.5 7.5H9.5L5 0.5Z" fill="#2e343e"/></svg>
<svg class="a" style="left:1310px;top:855px" width="9" height="10"><path d="M0.5 0.5L8.5 5L0.5 9.5Z" fill="#2e343e"/></svg>
<div class="t" style="left:1331px;top:849px;line-height:22px;color:#333945">Fascias</div>
<div class="t" style="left:1590px;top:849px;line-height:22px;color:#333945">Category</div>
<div class="t" style="left:1670px;top:849px;line-height:22px;color:#333945">1</div>
<div class="t" style="left:1750px;top:849px;line-height:22px;color:#333945">1</div>
<div class="t" style="left:1830px;top:849px;line-height:22px;color:#333945">2</div>
<div class="a" style="left:1293px;top:871px;width:612px;height:22px;background:#d3d3d5"></div>
<svg class="a" style="left:1310px;top:877px" width="9" height="10"><path d="M0.5 0.5L8.5 5L0.5 9.5Z" fill="#2e343e"/></svg>
<div class="t" style="left:1331px;top:871px;line-height:22px;color:#333945">Generic Models</div>
<div class="t" style="left:1590px;top:871px;line-height:22px;color:#333945">Category</div>
<div class="t" style="left:1670px;top:871px;line-height:22px;color:#333945">1</div>
<div class="t" style="left:1750px;top:871px;line-height:22px;color:#333945">1</div>
<div class="t" style="left:1830px;top:871px;line-height:22px;color:#333945">2</div>
<svg class="a" style="left:1310px;top:899px" width="9" height="10"><path d="M0.5 0.5L8.5 5L0.5 9.5Z" fill="#2e343e"/></svg>
<div class="t" style="left:1331px;top:893px;line-height:22px;color:#333945">Railings</div>
<div class="t" style="left:1590px;top:893px;line-height:22px;color:#333945">Category</div>
<div class="t" style="left:1670px;top:893px;line-height:22px;color:#333945">1</div>
<div class="t" style="left:1750px;top:893px;line-height:22px;color:#333945">1</div>
<div class="t" style="left:1830px;top:893px;line-height:22px;color:#333945">0</div>
<div class="a" style="left:1293px;top:915px;width:612px;height:22px;background:#d3d3d5"></div>
<svg class="a" style="left:1310px;top:921px" width="9" height="10"><path d="M0.5 0.5L8.5 5L0.5 9.5Z" fill="#2e343e"/></svg>
<div class="t" style="left:1331px;top:915px;line-height:22px;color:#333945">Roofs</div>
<div class="t" style="left:1590px;top:915px;line-height:22px;color:#333945">Category</div>
<div class="t" style="left:1670px;top:915px;line-height:22px;color:#333945">4</div>
<div class="t" style="left:1750px;top:915px;line-height:22px;color:#333945">4</div>
<div class="t" style="left:1830px;top:915px;line-height:22px;color:#333945">8</div>
<svg class="a" style="left:1310px;top:943px" width="9" height="10"><path d="M0.5 0.5L8.5 5L0.5 9.5Z" fill="#2e343e"/></svg>
<div class="t" style="left:1331px;top:937px;line-height:22px;color:#333945">Wall Sweeps</div>
<div class="t" style="left:1590px;top:937px;line-height:22px;color:#333945">Category</div>
<div class="t" style="left:1670px;top:937px;line-height:22px;color:#333945">2</div>
<div class="t" style="left:1750px;top:937px;line-height:22px;color:#333945">2</div>
<div class="t" style="left:1830px;top:937px;line-height:22px;color:#333945">1</div>
<div class="a" style="left:1293px;top:959px;width:612px;height:22px;background:#d3d3d5"></div>
<svg class="a" style="left:1310px;top:965px" width="9" height="10"><path d="M0.5 0.5L8.5 5L0.5 9.5Z" fill="#2e343e"/></svg>
<div class="t" style="left:1331px;top:959px;line-height:22px;color:#333945">Walls</div>
<div class="t" style="left:1590px;top:959px;line-height:22px;color:#333945">Category</div>
<div class="t" style="left:1670px;top:959px;line-height:22px;color:#333945">11</div>
<div class="t" style="left:1750px;top:959px;line-height:22px;color:#333945">11</div>
<div class="t" style="left:1830px;top:959px;line-height:22px;color:#333945">16</div>
<svg class="a" style="left:1310px;top:987px" width="9" height="10"><path d="M0.5 0.5L8.5 5L0.5 9.5Z" fill="#2e343e"/></svg>
<div class="t" style="left:1331px;top:981px;line-height:22px;color:#333945">Windows</div>
<div class="t" style="left:1590px;top:981px;line-height:22px;color:#333945">Category</div>
<div class="t" style="left:1670px;top:981px;line-height:22px;color:#333945">1</div>
<div class="t" style="left:1750px;top:981px;line-height:22px;color:#333945">1</div>
<div class="t" style="left:1830px;top:981px;line-height:22px;color:#333945">0</div>

<!-- STATUS -->
<div class="a" style="left:0;top:1053px;width:1920px;height:2px;background:#b0b1b5"></div>
<div class="t" style="left:8px;top:1060px;color:#333945">Ready</div>
<div class="a" style="left:51px;top:1062px;width:1px;height:14px;background:#3a404a"></div>
<div class="t" style="left:60px;top:1060px;color:#333945">UI: 11.9 ms</div>
<div class="t" style="left:158px;top:1060px;color:#333945;letter-spacing:-0.6px">UI FPS: 71.3</div>
<div class="t" style="left:259px;top:1060px;color:#333945;letter-spacing:-0.4px">Render FPS: 118</div>
<div class="t" style="right:67px;top:1060px;color:#333945">License valid until 2026-03-02</div>
<div class="a" style="left:1862px;top:1062px;width:1px;height:14px;background:#3a404a"></div>
<div class="t" style="left:1869px;top:1060px;color:#333945;letter-spacing:-0.55px">v1.3.7.0</div>
</body></html>
